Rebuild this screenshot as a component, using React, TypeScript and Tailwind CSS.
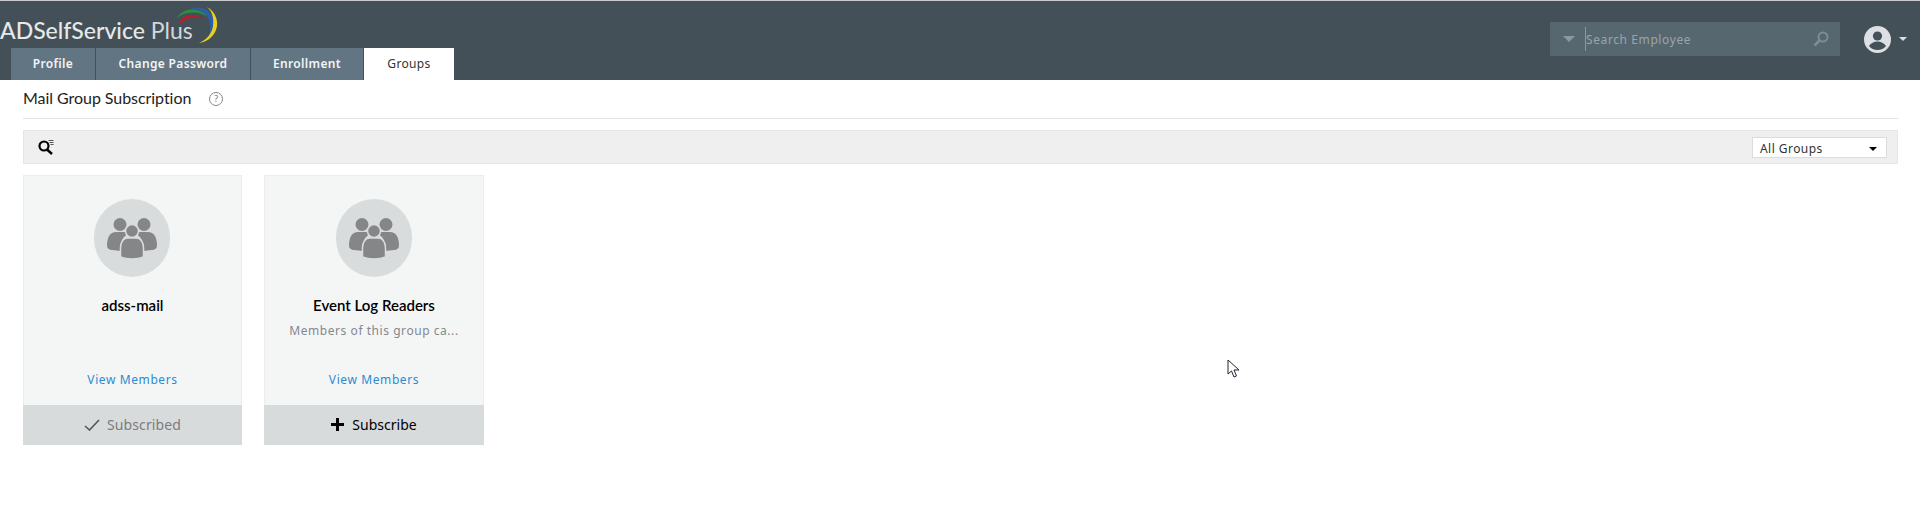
import React from "react";

const tabs = [
  { label: "Profile", width: "w-[85px]" },
  { label: "Change Password", width: "w-[155px]" },
  { label: "Enrollment", width: "w-[113px]" },
];

function GroupIcon() {
  return (
    <svg width="50" height="42" viewBox="0 0 50 42" fill="#858687">
      {/* back people */}
      <circle cx="13" cy="7.500" r="6.500" />
      <circle cx="37" cy="7.500" r="6.500" />
      <path d="M0 29c0-9 3-14 9-14h8c2 0 3 1 4 2-4 2-7 6-7 12v5l-9-1c-3 0-5-2-5-4z" />
      <path d="M50 29c0-9-3-14-9-14h-8c-2 0-3 1-4 2 4 2 7 6 7 12v5l9-1c3 0 5-2 5-4z" />
      {/* front person with the pale ring round it */}
      <circle cx="25" cy="14" r="6.500" stroke="#d9dcdd" strokeWidth="1.500" />
      <path d="M13.500 40V31c0-6 3-10 7.500-10h8c4.500 0 7.500 4 7.500 10v9c-3.500 1.500-7.500 2-11.500 2s-8-.5-11.500-2z" stroke="#d9dcdd" strokeWidth="1.500" />
    </svg>
  );
}

function GroupCard({
  name,
  desc,
  subscribed,
  width,
  avatarNudge,
}: {
  name: string;
  desc?: string;
  subscribed?: boolean;
  width: string;
  avatarNudge?: string;
}) {
  return (
    <div className={`${width} h-[270px] flex flex-col`}>
      <div className="flex-1 flex flex-col items-center bg-[#f4f6f6] border border-b-0 border-[#ececec]">
        <div className={`mt-[23px] w-[76px] h-[78px] rounded-full bg-[#d9dcdd] flex items-center justify-center ${avatarNudge ?? ""}`}>
          <GroupIcon />
        </div>
        <div className="mt-[18px] h-[20px] leading-[20px] text-[15px] font-semibold text-black font-['Lato',sans-serif]">
          {name}
        </div>
        <div className="mt-[6px] h-[20px] leading-[20px] text-[12px] tracking-[0.55px] text-[#85878f] font-['Noto_Sans','DejaVu_Sans',sans-serif]">
          {desc}
        </div>
        <div className="mt-[29px] h-[20px] leading-[20px] text-[12px] tracking-[0.6px] text-[#2c8ad0] font-['Noto_Sans','DejaVu_Sans',sans-serif]">
          View Members
        </div>
      </div>
      <div className="h-[40px] pb-[1px] bg-[#d8dbdc] flex items-center justify-center gap-[7px] text-[14px] font-['Noto_Sans','DejaVu_Sans',sans-serif]">
        {subscribed ? (
          <>
            <svg width="16" height="12" viewBox="0 0 16 12" fill="none" stroke="#555" strokeWidth="1.6">
              <path d="M1 7l4.500 4L15 1" />
            </svg>
            <span className="text-[#7c7c7c] tracking-[0.1px]">Subscribed</span>
          </>
        ) : (
          <>
            <svg width="13" height="13" viewBox="0 0 13 13" fill="#000">
              <path d="M5 0h3v5h5v3H8v5H5V8H0V5h5z" />
            </svg>
            <span className="text-black ml-[1px]">Subscribe</span>
          </>
        )}
      </div>
    </div>
  );
}

export default function App() {
  return (
    <div className="relative w-[1920px] h-[509px] bg-white overflow-hidden font-['Noto_Sans',sans-serif]">
      {/* Header */}
      <div className="h-[80px] bg-[#445058] border-t border-[#c9cccf] flex justify-between">
        <div className="flex flex-col justify-end">
          <div className="relative h-[47px]">
            <span className="absolute left-0 top-[14px] whitespace-nowrap text-[23px] leading-[30px] font-medium text-[#e6e8e9] font-['Lato',sans-serif]">
              ADSelfService <span className="font-normal text-[#d3d7da]">Plus</span>
            </span>
            {/* logo swoosh, viewBox in page pixels */}
            <svg className="absolute left-[170px] top-0" width="50" height="46" viewBox="170 1 50 46">
              <path d="M179 24C181 15 193 12 205 19 195 16 186 17 181 24z" fill="#b5202a" />
              <path d="M177 18C183 8 198 6 208 17 198 11 186 11 177 18z" fill="#2f8f3e" />
              <path d="M190 9C199 5 210 9 214 19 216 26 213 33 209 36 212 28 210 18 204 13 199 9 194 8 190 9z" fill="#2b5fa8" />
              <path d="M207 7C216 12 219 22 216 30 213 38 206 42 199 43 206 40 212 34 213 26 214 18 212 11 207 7z" fill="#e8cf22" />
            </svg>
          </div>
          <div className="flex pl-[11px] h-[32px]">
            {tabs.map((t) => (
              <div
                key={t.label}
                className={`${t.width} flex items-center justify-center bg-[#627583] border-r border-[#445058] text-[12px] font-semibold tracking-[0.35px] text-[#f2f4f5]`}
              >
                {t.label}
              </div>
            ))}
            <div className="w-[90px] flex items-center justify-center bg-white text-[12px] tracking-[0.35px] text-[#333]">
              Groups
            </div>
          </div>
        </div>
        <div className="flex items-start pt-[21px]">
          <div className="w-[290px] h-[34px] bg-[#566770] flex items-center">
            <span className="ml-[13px] w-0 h-0 border-x-[6px] border-x-transparent border-t-[6px] border-t-[#8b989f]" />
            <span className="ml-[10px] border-l border-[#8b989f] h-[24px] leading-[25px] text-[12px] tracking-[0.6px] text-[#9aa5ab] flex-1">
              Search Employee
            </span>
            <svg className="mr-[11px]" width="16" height="16" viewBox="0 0 16 16" fill="none" stroke="#7f8c93" strokeWidth="2">
              <circle cx="10" cy="6" r="4.500" />
              <path d="M6.500 9.500L1.500 14.500" strokeWidth="2.600" />
            </svg>
          </div>
          <svg className="ml-[24px] mt-[4px]" width="27" height="27" viewBox="0 0 27 27">
            <circle cx="13.500" cy="13.500" r="13.500" fill="#dce0e4" />
            <circle cx="13.500" cy="10" r="4.600" fill="#445058" />
            <path d="M5 20c2-3 5-4.500 8.500-4.500S20 17 22 20c-2 2.500-5 4-8.500 4S7 22.500 5 20z" fill="#445058" />
          </svg>
          <span className="ml-[8px] mt-[15px] mr-[13px] w-0 h-0 border-x-[4px] border-x-transparent border-t-[4px] border-t-[#dce0e4]" />
        </div>
      </div>

      {/* Body */}
      <div className="px-[23px] pr-[22px]">
        <div className="h-[39px] pb-[3px] flex items-center border-b border-[#e3e3e3]">
          <span className="text-[16px] tracking-[-0.05px] text-[#222] font-['Lato',sans-serif]">Mail Group Subscription</span>
          <span className="ml-[18px] mt-[2px] w-[14px] h-[14px] rounded-full border border-[#888] flex items-center justify-center text-[9px] leading-none text-[#777]">
            ?
          </span>
        </div>
        <div className="mt-[11px] h-[34px] bg-[#efefef] border border-[#e6e6e6] flex items-center justify-between pl-[14px] pr-[10px]">
          <svg width="16" height="16" viewBox="0 0 16 16" fill="none" stroke="#000">
            <circle cx="6" cy="7" r="4.500" strokeWidth="2.200" />
            <path d="M9 10.500l5 4.500" strokeWidth="2.400" />
            <path d="M10.500 1.500h5M11.500 3.500h4M12.500 5.500h3" strokeWidth="1" stroke="#555" />
          </svg>
          <div className="w-[135px] h-[21px] mt-[1px] pt-[2px] bg-white border border-[#dcdcdc] flex items-center justify-between pl-[7px] pr-[9px] text-[12px] tracking-[0.45px] text-[#333]">
            All Groups
            <span className="w-0 h-0 border-x-[4px] border-x-transparent border-t-[4px] border-t-black" />
          </div>
        </div>
        <div className="mt-[11px] flex gap-[22px]">
          <GroupCard name="adss-mail" subscribed width="w-[219px]" avatarNudge="mr-[1px]" />
          <GroupCard name="Event Log Readers" desc="Members of this group ca..." width="w-[220px]" />
        </div>
      </div>

      {/* Mouse cursor in the screenshot */}
      <svg className="absolute left-[1227px] top-[359px]" width="14" height="20" viewBox="0 0 14 20" fill="#fff" stroke="#223">
        <path d="M1 1v14l3.500-3 2.500 6 2.500-1-2.500-6h5z" />
      </svg>
    </div>
  );
}
